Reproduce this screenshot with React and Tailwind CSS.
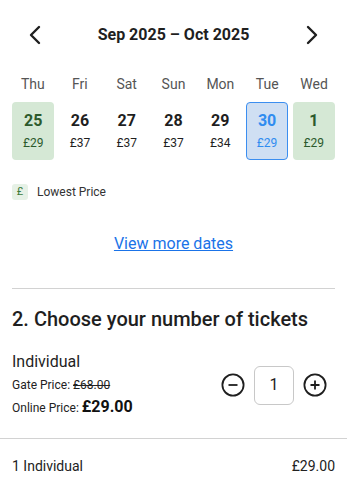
import React from "react";

const days = [
  { d: "Thu", n: "25", p: "£29", t: "green" },
  { d: "Fri", n: "26", p: "£37" },
  { d: "Sat", n: "27", p: "£37" },
  { d: "Sun", n: "28", p: "£37" },
  { d: "Mon", n: "29", p: "£34" },
  { d: "Tue", n: "30", p: "£29", t: "blue" },
  { d: "Wed", n: "1", p: "£29", t: "green" },
];

export default function App() {
  return (
    <div className="w-[347px] h-[484px] bg-white overflow-hidden text-[#1f1f1f]" style={{ fontFamily: "Roboto, 'Liberation Sans', sans-serif" }}>
      <div className="flex items-center justify-between px-[27px] pt-[24px] h-[46px]">
        <svg width="16" height="20" viewBox="0 0 16 20" fill="none"><path d="M12 2 L4 10 L12 18" stroke="#1f1f1f" strokeWidth="2.4" strokeLinecap="round" strokeLinejoin="round" /></svg>
        <div className="text-[16px] font-bold">Sep 2025 – Oct 2025</div>
        <svg width="16" height="20" viewBox="0 0 16 20" fill="none"><path d="M4 2 L12 10 L4 18" stroke="#1f1f1f" strokeWidth="2.4" strokeLinecap="round" strokeLinejoin="round" /></svg>
      </div>
      <div className="grid grid-cols-7 gap-x-[5px] px-3 mt-[28px]">
        {days.map((x) => (
          <div key={x.d} className="text-center text-[14px] text-[#555] leading-[20px]">{x.d}</div>
        ))}
      </div>
      <div className="grid grid-cols-7 gap-x-[4.5px] px-3 mt-[8px]">
        {days.map((x) => {
          const cls =
            x.t === "green"
              ? "bg-[#d5e8d5] text-[#2c5a2c]"
              : x.t === "blue"
              ? "bg-[#cfdff3] text-[#2f8cf0] border border-[#3b8ef0]"
              : "text-[#1f1f1f]";
          return (
            <div key={x.n} className={"h-[58px] rounded-[4px] flex flex-col items-center justify-center " + cls}>
              <div className="text-[16px] font-bold leading-[20px]">{x.n}</div>
              <div className="text-[12px] leading-[16px] mt-[4px]">{x.p}</div>
            </div>
          );
        })}
      </div>
      <div className="flex items-center px-3 mt-[23px] gap-[9px]">
        <div className="w-[16px] h-[16px] rounded-[3px] bg-[#e6f1e6] text-[#3a7a3a] text-[11px] flex items-center justify-center">£</div>
        <div className="text-[12px] text-[#333]">Lowest Price</div>
      </div>
      <div className="text-center mt-[31px]">
        <a className="text-[16px] text-[#1a73e8] underline">View more dates</a>
      </div>
      <div className="mx-3 mt-[32px] h-px bg-[#d2d2d2]"></div>
      <div className="px-3 mt-[17px] text-[20px] font-medium leading-[26px]">2. Choose your number of tickets</div>
      <div className="flex items-center justify-between px-3 mt-[20px]">
        <div>
          <div className="text-[16px] leading-[20px]">Individual</div>
          <div className="text-[12px] leading-[14px] mt-[6px] text-[#222]">
            Gate Price: <span className="line-through">£68.00</span>
          </div>
          <div className="text-[12px] leading-[20px] mt-[5px] text-[#222] flex items-baseline">
            Online Price:&nbsp;<span className="text-[16px] font-bold text-[#111]">£29.00</span>
          </div>
        </div>
        <div className="flex items-center gap-[9px] mr-[8px]">
          <svg width="24" height="24" viewBox="0 0 24 24" fill="none"><circle cx="12" cy="12" r="10.6" stroke="#1f1f1f" strokeWidth="1.8" /><path d="M7.5 12 H16.5" stroke="#1f1f1f" strokeWidth="1.8" /></svg>
          <div className="w-[40px] h-[39px] border border-[#c8c8c8] rounded-[6px] flex items-center justify-center text-[16px]">1</div>
          <svg width="24" height="24" viewBox="0 0 24 24" fill="none"><circle cx="12" cy="12" r="10.6" stroke="#1f1f1f" strokeWidth="1.8" /><path d="M7.5 12 H16.5 M12 7.5 V16.5" stroke="#1f1f1f" strokeWidth="1.8" /></svg>
        </div>
      </div>
      <div className="mt-[20px] h-px bg-[#d2d2d2]"></div>
      <div className="flex justify-between px-3 mt-[17px] text-[14px] leading-[20px] text-[#222]">
        <div>1 Individual</div>
        <div>£29.00</div>
      </div>
    </div>
  );
}
